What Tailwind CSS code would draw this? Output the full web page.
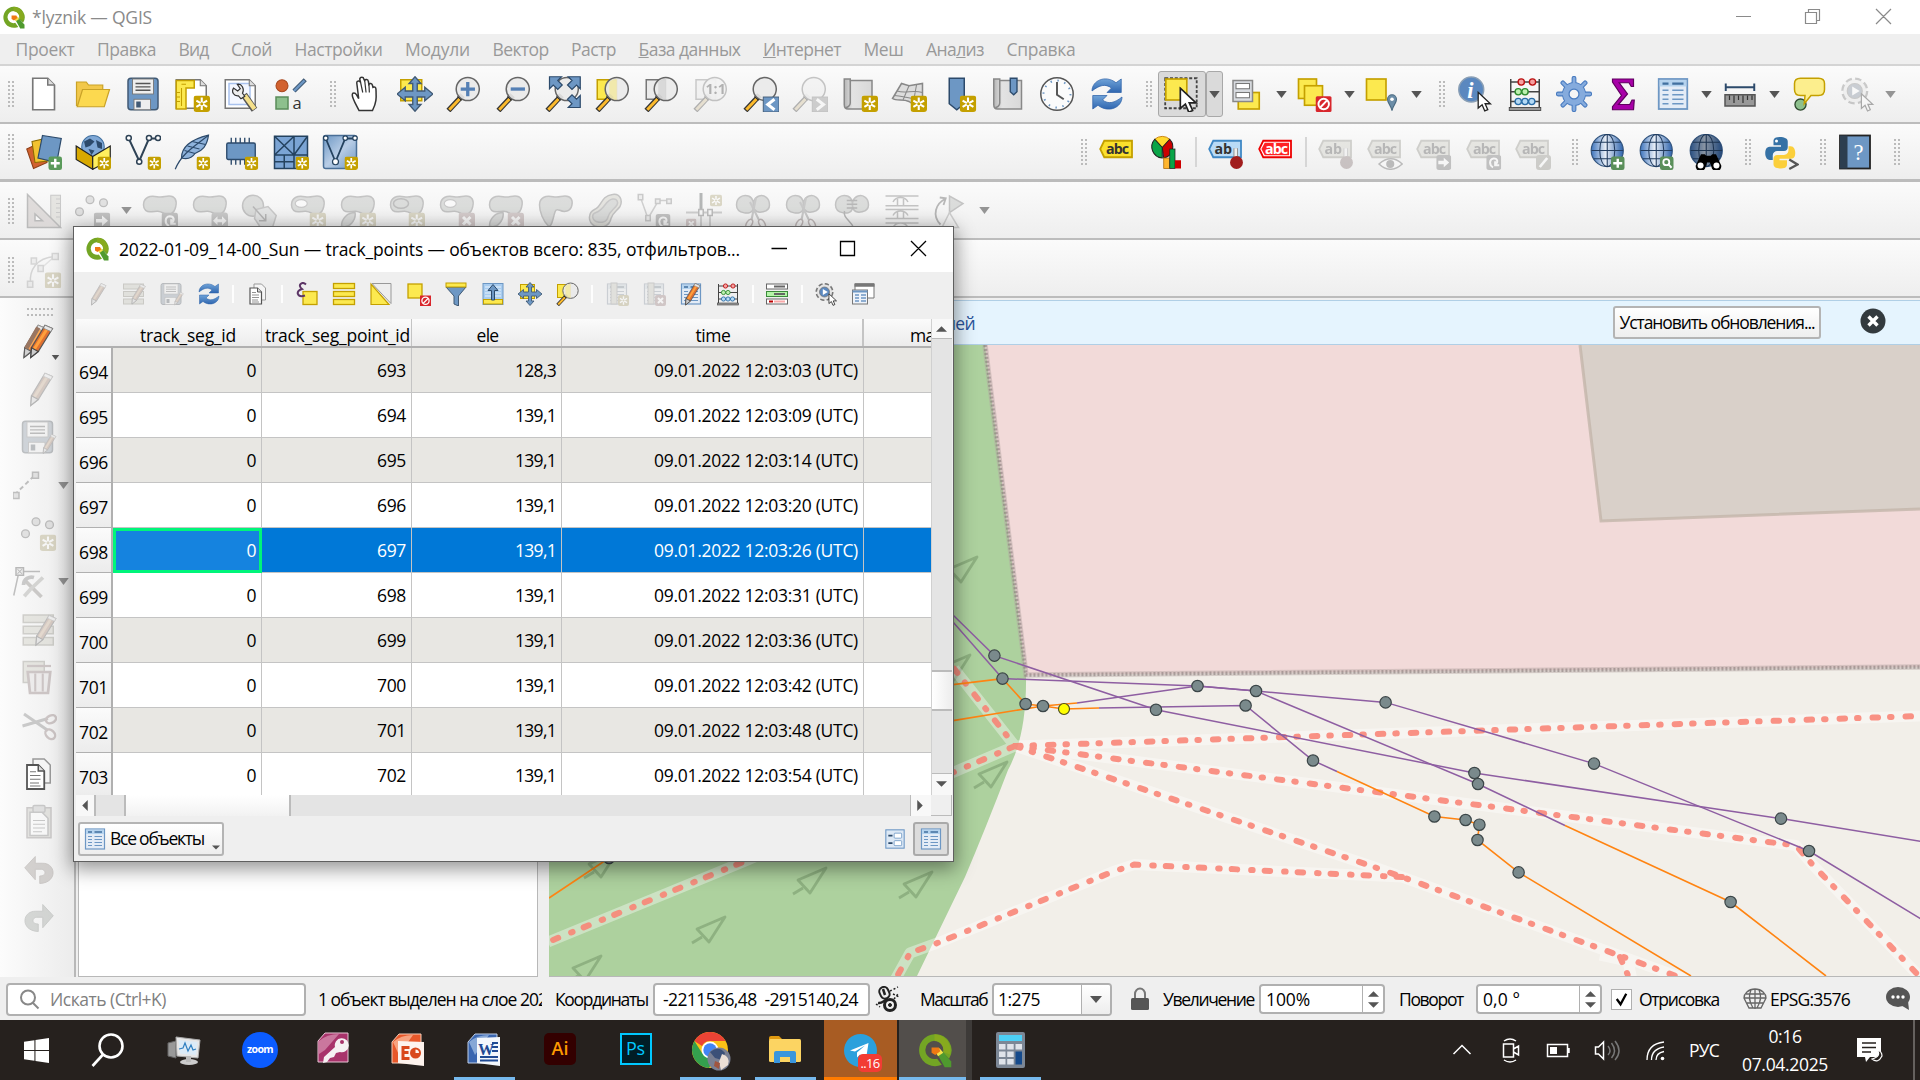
<!DOCTYPE html>
<html lang="ru">
<head>
<meta charset="utf-8">
<title>*lyznik — QGIS</title>
<script src="https://cdn.jsdelivr.net/npm/@tailwindcss/browser@4"></script>
</head>
<body class="w-[1920px] h-[1080px] overflow-hidden bg-[#efefef] font-['Open_Sans','Noto_Sans',sans-serif] text-[17.5px] leading-none text-black">

<svg class="absolute h-0 w-0">
  <defs>
    <linearGradient id="gGlobe" x1="0" x2="1"><stop offset="0" stop-color="#3d74bd"/><stop offset=".45" stop-color="#e8eef6"/><stop offset="1" stop-color="#2c62ac"/></linearGradient>
    <linearGradient id="gBlue" x1="0" y1="0" x2="0" y2="1"><stop offset="0" stop-color="#6fa3d8"/><stop offset="1" stop-color="#2f66b0"/></linearGradient>
    <linearGradient id="gGray" x1="0" x2="1"><stop offset="0" stop-color="#b5b5b5"/><stop offset=".3" stop-color="#e3e3e3"/><stop offset="1" stop-color="#d8d8d8"/></linearGradient>
    <linearGradient id="gSheet" x1="0" y1="0" x2="1" y2="1"><stop offset="0" stop-color="#6d97c4"/><stop offset=".5" stop-color="#b8cde6"/><stop offset="1" stop-color="#6d97c4"/></linearGradient>
  </defs>
</svg>
<svg class="hidden">
  <symbol id="star" viewBox="0 0 11 11"><rect width="11" height="11" rx="2" fill="#c4a000"/><path d="M5.5 1.3v8.4M1.9 3.4l7.2 4.2M1.9 7.6l7.2-4.2" stroke="#fff" stroke-width="1.4"/><circle cx="5.5" cy="5.5" r="1" fill="#c4a000"/></symbol>
  <symbol id="cross" viewBox="0 0 11 11"><rect width="11" height="11" rx="2" fill="#c87070"/><path d="M3 3l5 5M8 3l-5 5" stroke="#fff" stroke-width="2"/></symbol>
  <symbol id="goto" viewBox="0 0 11 11"><rect width="11" height="11" rx="2" fill="#666"/><path d="M1.5 4.3h4V2l4 3.5-4 3.5V6.700h-4z" fill="#fff"/></symbol>
  <symbol id="rot" viewBox="0 0 11 11"><rect width="11" height="11" rx="2" fill="#666"/><path d="M5 9C2 7.500 2 3 5.500 2.500 8.500 2.500 9 5.500 6.500 7M6.500 4.500v3h3" stroke="#fff" stroke-width="1.4" fill="none"/></symbol>
  <symbol id="lens" viewBox="0 0 24 24"><path d="M11 13L1.600 23" stroke="#333" stroke-width="3.600"/><path d="M9 15.300L2.200 22.500" stroke="#fcba2c" stroke-width="2"/><path d="M11 12.800l-2 2.200" stroke="#111" stroke-width="4"/><circle cx="14.500" cy="8.700" r="7.700" fill="#eaeaea" fill-opacity=".93" stroke="#666"/></symbol>
  <symbol id="cursor" viewBox="0 0 12 16"><path d="M1 1v12l3-2.500 2 4.700 2.300-1-2-4.500h4z" fill="#fff" stroke="#222" stroke-width="1"/></symbol>
  <symbol id="penc" viewBox="0 0 24 24"><path d="M16 1.500l5 2.200L11.500 19l-5 4 .5-6.500z" fill="#e07030" stroke="#555" stroke-width=".8"/><path d="M18 3L8.500 18" stroke="#ffa03c" stroke-width="2"/><path d="M7 16.500l4.500 2.500-5 4z" fill="#ccc" stroke="#444" stroke-width=".8"/><path d="M16 1.500l5 2.200-1 2-5-2.200z" fill="#e8e8e8" stroke="#888" stroke-width=".5"/></symbol>
  <symbol id="qlogo" viewBox="0 0 24 24"><path d="M12 .8a11 11 0 1 0 5 21l-3.200-4.200A6.300 6.300 0 1 1 18 13.600l4 4A11 11 0 0 0 12 .8z" fill="#73a524"/><path d="M12 .8a11 11 0 0 1 10.500 14l-4.600-1.700A6.200 6.200 0 0 0 12 5.500z" fill="#87aa1e"/><path d="M14 14.500l3-2.500 6.500 7.500v4h-4.500z" fill="#4f9a2e"/><path d="M12.500 13l3-2.500 2.500 3-3.500 2.500z" fill="#f5e04a"/><path d="M10 10h5l1 2.500-3.500 2.500-2.500-1.500z" fill="#ee7913"/></symbol>

  <symbol id="new" viewBox="0 0 24 24"><path d="M4.500 1.500h10l4.500 4.500v16.500h-14.500z" fill="#fff" stroke="#777" stroke-width="1.100"/><path d="M14.500 1.500v4.500h4.500" fill="#ddd" stroke="#777"/></symbol>
  <symbol id="open" viewBox="0 0 24 24"><path d="M1 20V4h6.500l1.500 2h9.500v4" fill="#f2c84b" stroke="#c9a227" stroke-width=".8"/><path d="M1.500 20.500L5 9h18l-3.500 11.500z" fill="#fcd94f" stroke="#c9a227" stroke-width=".8"/></symbol>
  <symbol id="save" viewBox="0 0 24 24"><rect x="2" y="1.500" width="20" height="21" rx="2" fill="#6d97c4" stroke="#415a75"/><rect x="5" y="2" width="14" height="10" fill="#eee" stroke="#777" stroke-width=".6"/><path d="M7 5h10M7 7.200h10M7 9.500h10" stroke="#555" stroke-width=".9"/><rect x="6" y="15.500" width="11" height="7" fill="#eee" stroke="#777" stroke-width=".6"/><rect x="7.500" y="17" width="3" height="4" fill="#415a75"/></symbol>
  <symbol id="layout" viewBox="0 0 24 24"><path d="M1.500 2.500h16l4 4v15h-20z" fill="#fff" stroke="#777"/><path d="M1.500 3h12v5H8v14H1.500z" fill="#fce94f" stroke="#c4a000"/><path d="M5 5.500h3M5 8v12M2 11h2M2 14h2M2 17h2" stroke="#c4a000" stroke-width=".7"/><path d="M17.500 2.500v4h4" fill="#ddd" stroke="#777" stroke-width=".7"/><use href="#star" x="13" y="13" width="11" height="11"/></symbol>
  <symbol id="layman" viewBox="0 0 24 24"><path d="M1.500 2.500h16l4 4v15h-20z" fill="#fff" stroke="#777"/><rect x="4" y="5" width="14" height="14" fill="#f4f7ff" stroke="#a9c2ee"/><path d="M17.500 2.500v4h4" fill="#ddd" stroke="#777" stroke-width=".7"/><path d="M14 12.500l7 10" stroke="#555" stroke-width="4.500"/><path d="M14.500 13l6.500 9" stroke="#f5e08a" stroke-width="3"/><path d="M9.500 5.500c3-.5 5 3 3.500 6l1.500 2-2.500 1.700-1.700-2C7 13.500 5.500 10.500 7 8l2.800 2 1.700-1.500z" fill="#eee" stroke="#333" stroke-width=".8"/></symbol>
  <symbol id="style" viewBox="0 0 24 24"><circle cx="6" cy="6.500" r="4" fill="#d2622f" stroke="#a8471d" stroke-width=".7"/><path d="M21.500 2.500l-7.500 7.500" stroke="#415a75" stroke-width="3"/><path d="M21 3l-7 7" stroke="#6d97c4" stroke-width="1.600"/><rect x="2" y="14" width="8" height="8" fill="#8dc08d" stroke="#5a8c5a"/><text x="13" y="22" font-size="11" fill="#333">a</text></symbol>
  <symbol id="hand" viewBox="0 0 24 24"><path d="M8 23C6 19 3.500 15 3.500 12.500c0-1.500 2-1.500 2.800 0l1.500 2.500L6.500 4.500C6.500 3 8.500 2.800 9 4.300L8.500 2c.3-1.500 2.500-1.500 2.700 0l.5 1c.6-1 2.300-.8 2.500.5l.4 2c.6-.9 2-.7 2.300.5l.4 1.500c1-.6 1.900 0 2 1.200C19.500 14 20 17 17 23z" fill="#fff" stroke="#333" stroke-width="1"/><path d="M9 4l1.500 7M11.800 3l.9 8M14.600 5l.3 6" stroke="#333" stroke-width=".8"/></symbol>
  <symbol id="pan" viewBox="0 0 24 24"><rect x="2.500" y="2.500" width="14" height="14" fill="#fce94f" stroke="#c4a000"/><path d="M12 .5l4 4.500h-2.500v5h5V7.500L24 12l-5.500 4.500V14h-5v5H16l-4 4.500L8 19h2.500v-5h-5v2.500L0 12l5.500-4.500V10h5V5H8z" fill="#6d97c4" stroke="#415a75" stroke-width=".9"/></symbol>
  <symbol id="zin" viewBox="0 0 24 24"><use href="#lens"/><path d="M14.500 4v9.500M9.800 8.700h9.500" stroke="#5580b5" stroke-width="2.200"/></symbol>
  <symbol id="zout" viewBox="0 0 24 24"><use href="#lens"/><path d="M9.800 8.700h9.500" stroke="#5580b5" stroke-width="2.200"/></symbol>
  <symbol id="zfull" viewBox="0 0 24 24"><use href="#lens"/><path d="M3 .5h8l-2.500 2.500 3 3-3 3-3-3L3 8.500zM23.500.5v8L21 6l-3 3-3-3 3-3-2.500-2.500zM23.500 21h-8l2.500-2.500-3-3 3-3 3 3 2.500-2.500z" fill="#6d97c4" stroke="#2c4a6b" stroke-width=".8"/></symbol>
  <symbol id="zsel" viewBox="0 0 24 24"><rect x="1.500" y="2.500" width="13" height="13" fill="#fce94f" stroke="#c4a000"/><use href="#lens"/><path d="M9.500 4c1-1 3-2 5-2v14c-2 0-4-1-5-2z" fill="#fce94f" opacity=".35"/></symbol>
  <symbol id="zlay" viewBox="0 0 24 24"><rect x="1.500" y="2.500" width="13" height="13" fill="#eaeaea" stroke="#777"/><use href="#lens"/><path d="M9.500 4c1-1 3-2 5-2v14c-2 0-4-1-5-2z" fill="#bbb" opacity=".35"/></symbol>
  <symbol id="z11" viewBox="0 0 24 24"><rect x="2" y="2.500" width="13" height="13" fill="#eaeaea" stroke="#777"/><use href="#lens"/><text x="8.300" y="12.300" font-size="9.500" font-weight="700" fill="#333">1:1</text></symbol>
  <symbol id="zlast" viewBox="0 0 24 24"><use href="#lens"/><rect x="13.500" y="14" width="10.500" height="10" fill="#6d97c4" stroke="#415a75" stroke-width=".6"/><path d="M21 15.500l-4.500 3.500 4.500 3.500" stroke="#fff" stroke-width="2" fill="none"/></symbol>
  <symbol id="znext" viewBox="0 0 24 24"><use href="#lens"/><rect x="13.500" y="14" width="10.500" height="10" fill="#888" stroke="#666" stroke-width=".6"/><path d="M16.500 15.500l4.500 3.500-4.500 3.500" stroke="#fff" stroke-width="2" fill="none"/></symbol>
  <symbol id="map" viewBox="0 0 24 24"><path d="M1.500 2h4v1H20v19H4c-2 0-2.500-1-2.500-3z" fill="url(#gGray)" stroke="#888"/><path d="M5.500 3v15c0 2-2 3-3 3" fill="none" stroke="#888"/></symbol>
  <symbol id="newmap" viewBox="0 0 24 24"><use href="#map"/><use href="#star" x="13" y="13" width="11" height="11"/></symbol>
  <symbol id="new3d" viewBox="0 0 24 24"><path d="M1 15L7 5l5 1.500L21 5v14c-3-2-6 1-9-2-4-2-8 0-11-2z" fill="#ddd" stroke="#888"/><path d="M4 10c6 2 10-1 17 1M2 13c7 0 9 3 19 2M12 6.500L8 16M17 6l-2 11" stroke="#888" fill="none" stroke-width=".7"/><use href="#star" x="13" y="13" width="11" height="11"/></symbol>
  <symbol id="bmnew" viewBox="0 0 24 24"><path d="M5.500 1.500h10v17l-5 4-5-4z" fill="#6d97c4" stroke="#2c4a6b"/><use href="#star" x="12.500" y="13" width="11" height="11"/></symbol>
  <symbol id="bm" viewBox="0 0 24 24"><g transform="translate(1 0)"><use href="#map"/></g><path d="M13.500 1.500h4.500v9l-2.200 2-2.300-2z" fill="#6d97c4" stroke="#2c4a6b" stroke-width=".9"/></symbol>
  <symbol id="clock" viewBox="0 0 24 24"><circle cx="12" cy="12" r="10.800" fill="#fbfbfb" stroke="#555" stroke-width="1"/><circle cx="12" cy="12" r="9" fill="none" stroke="#6d97c4" stroke-width="1.300" stroke-dasharray="1 3.712"/><path d="M12 4v8.500l4.500 3" stroke="#555" stroke-width="1.300" fill="none"/></symbol>
  <symbol id="refresh" viewBox="0 0 24 24"><path d="M2 10C2 3 11-1 18 4.500L21.500 2v9H12l3-3C11 5 7 6 2 10z" fill="url(#gBlue)" stroke="#2d62a8" stroke-width=".5"/><path d="M22 14c0 7-9 11-16 5.500L2.500 22v-9H12l-3 3c4 3 8 2 13-2z" fill="url(#gBlue)" stroke="#2d62a8" stroke-width=".5"/></symbol>
  <symbol id="select" viewBox="0 0 24 24"><rect x=".8" y="1.500" width="21" height="20" fill="none" stroke="#444" stroke-dasharray="2 1.200" stroke-width="1.200"/><rect x="1.200" y="2" width="14" height="14" fill="#fce94f" stroke="#c4a000" stroke-width="1.100"/><use href="#cursor" x="9" y="7" width="15" height="18"/></symbol>
  <symbol id="selform" viewBox="0 0 24 24"><rect x="5.500" y="11" width="14" height="11" fill="#fce94f" stroke="#c4a000" stroke-width="1.100"/><rect x="2" y="3" width="13" height="14" fill="#d8dbe0" stroke="#888"/><rect x="4" y="5" width="9" height="3.500" fill="#fff" stroke="#777" stroke-width=".7"/><rect x="4" y="11" width="9" height="3.500" fill="#fff" stroke="#777" stroke-width=".7"/></symbol>
  <symbol id="desel" viewBox="0 0 24 24"><rect x="1" y="2" width="12" height="13" fill="#fce94f" stroke="#c4a000" stroke-width="1.100"/><rect x="5" y="6.500" width="12" height="13" fill="#fce94f" stroke="#c4a000" stroke-width="1.100"/><rect x="12.500" y="13.500" width="10.500" height="10.500" rx="1" fill="#d8262c"/><circle cx="17.800" cy="18.700" r="3.500" fill="none" stroke="#fff" stroke-width="1.300"/><path d="M15.500 21l4.500-4.700" stroke="#fff" stroke-width="1.300"/></symbol>
  <symbol id="selloc" viewBox="0 0 24 24"><rect x="1" y="2" width="13" height="14" fill="#fce94f" stroke="#c4a000" stroke-width="1.100"/><path d="M18 23c-1-4-3-5-3-7.500a3 3 0 0 1 6 0C21 18 19 19 18 23z" fill="#6c8ea8" stroke="#4a6a80" stroke-width=".7"/><circle cx="18" cy="15.500" r="1.200" fill="#fff"/></symbol>
  <symbol id="ident" viewBox="0 0 24 24"><circle cx="9.500" cy="9" r="8.300" fill="#5b88bf" stroke="#8a9fb5"/><text x="6.800" y="14.500" font-size="15" font-style="italic" font-weight="700" fill="#fff" font-family="Liberation Serif">i</text><use href="#cursor" x="13" y="10" width="11" height="14"/></symbol>
  <symbol id="abacus" viewBox="0 0 24 24"><path d="M2.500 2v19M21.500 2v19M2.500 4h19M2.500 10.500h19M2.500 17h19" stroke="#444" fill="none"/><rect x="1.500" y="21" width="21" height="2" fill="#999" stroke="#444" stroke-width=".6"/><g stroke-width=".9"><g fill="#f7a1a1" stroke="#b11"><circle cx="9.500" cy="4" r="2.100"/><circle cx="17" cy="4" r="2.100"/></g><g fill="#bdf0b0" stroke="#2e8b2e"><circle cx="7.500" cy="10.500" r="2.100"/><circle cx="12" cy="10.500" r="2.100"/></g><g fill="#b5daf5" stroke="#2b6ea8"><circle cx="7.500" cy="17" r="2.100"/><circle cx="12" cy="17" r="2.100"/><circle cx="16.500" cy="17" r="2.100"/></g></g></symbol>
  <symbol id="gear" viewBox="0 0 24 24"><path d="M12 1.500v21M1.500 12h21M4.600 4.600l14.800 14.800M19.400 4.600L4.600 19.400" stroke="#4a7cc0" stroke-width="3.200" stroke-linecap="round"/><circle cx="12" cy="12" r="5.500" fill="none" stroke="#4a7cc0" stroke-width="5"/><path d="M12 1.500v21M1.500 12h21M4.600 4.600l14.800 14.800M19.400 4.600L4.600 19.400" stroke="#85abdd" stroke-width="1.800" stroke-linecap="round"/><circle cx="12" cy="12" r="5.500" fill="none" stroke="#85abdd" stroke-width="3.800"/><circle cx="12" cy="12" r="3.300" fill="#f5f5f5" stroke="#4a7cc0" stroke-width=".8"/></symbol>
  <symbol id="sigma" viewBox="0 0 24 24"><path d="M5 2h14v5h-1.500L16 4.500H9.500L15 12 9 19h7.500l1.500-3h1.500l-.5 6.500H5v-2L11 13 5 4z" fill="#a800a8" stroke="#600060" stroke-width=".8"/></symbol>
  <symbol id="table" viewBox="0 0 24 24"><rect x="2.500" y="2" width="19" height="20" fill="#e4ecf6" stroke="#6d97c4" stroke-width="1.200"/><rect x="3.100" y="2.600" width="17.800" height="4.400" fill="#b5d3ee"/><path d="M5 5h4M11.500 5h7.500" stroke="#41709f" stroke-width="1.500"/><path d="M5 9.500h4M11.500 9.500h7.500M5 12.500h4M11.500 12.500h7.500M5 15.500h4M11.500 15.500h7.500M5 18.500h4M11.500 18.500h7.500" stroke="#6d97c4"/></symbol>
  <symbol id="ruler" viewBox="0 0 24 24"><path d="M2.500 5v5M21.500 5v5M2.500 7.500h19" stroke="#2c4a6b" stroke-width="1.300"/><rect x="2" y="12.500" width="20" height="7.500" fill="#999" stroke="#555"/><path d="M5 13v3M8 13v5M11 13v3M14 13v5M17 13v3M20 13v3" stroke="#333" stroke-width=".8"/></symbol>
  <symbol id="tip" viewBox="0 0 24 24"><circle cx="7" cy="19" r="3.700" fill="#8dc08d" stroke="#2f4a2f" stroke-width=".9"/><path d="M7 1.500h12q4 0 4 3.500v4q0 4-4 4h-5l-4.500 5.500L10 13H7q-4 0-4-4V5q0-3.500 4-3.500z" fill="#fcee8d" stroke="#c4a000"/></symbol>
  <symbol id="act" viewBox="0 0 24 24"><circle cx="10.500" cy="10" r="7.800" fill="#ddd" stroke="#777" stroke-width="2.500" stroke-dasharray="4 2.130"/><circle cx="10.500" cy="10" r="7.500" fill="#e6e6e6"/><circle cx="10.500" cy="10" r="5" fill="#5b88bf" stroke="#777" stroke-width=".8"/><path d="M8.800 7l5 3-5 3z" fill="#fff"/><use href="#cursor" x="14" y="11" width="10" height="13"/></symbol>
  <symbol id="dsm" viewBox="0 0 24 24"><path d="M.5 10L9 6l5 13-9 4z" fill="#d2622f" stroke="#8e3f18" stroke-width=".7"/><path d="M4 5l9-2 2 15-9 1z" fill="#f2c230" stroke="#8a6a00" stroke-width=".7"/><path d="M11 1l12.500 2-3 16L8 16z" fill="#6d97c4" stroke="#2c4a6b" stroke-width=".8"/><rect x="15" y="15" width="9" height="9" rx="1.500" fill="#5a9a5a"/><path d="M19.500 16.500v6M16.500 19.500h6" stroke="#fff" stroke-width="1.600"/></symbol>
  <symbol id="gpkg" viewBox="0 0 24 24"><circle cx="12" cy="8.500" r="7.500" fill="#7fa8d6" stroke="#41709f" stroke-width=".7"/><path d="M6 5l4-2 3 2-3 3-3 1zM14 4l4 2v4l-3-1zM9 10l4 1-2 3z" fill="#2c4a6b"/><path d="M.8 8l11 7v8.500L.8 17z" fill="#d8a900" stroke="#222" stroke-width=".8"/><path d="M11.800 15L23.500 8v9.500l-11.700 6z" fill="#ffef5e" stroke="#222" stroke-width=".8"/><use href="#star" x="15" y="15" width="9" height="9"/></symbol>
  <symbol id="vnew" viewBox="0 0 24 24"><path d="M2.500 3l7 15 6.500-15h5.500" fill="none" stroke="#2f4356" stroke-width="1.300"/><g fill="#fff" stroke="#2f4356"><circle cx="2.500" cy="2.700" r="1.700"/><circle cx="9.500" cy="18.500" r="1.700"/><circle cx="16" cy="2.700" r="1.700"/><circle cx="22" cy="2.700" r="1.700"/></g><use href="#star" x="15" y="15" width="9" height="9"/></symbol>
  <symbol id="feather" viewBox="0 0 24 24"><path d="M23 .8C14 3 5 7 5 16c4 1 7 0 9-3 5-2 8-5 9-12.200z" fill="#8fb3dc" stroke="#2c4a6b" stroke-width=".8"/><path d="M23 .8C14 8 5 13 .8 23.500M9 8l8 2M7 11l7 2M12 5l9 2" stroke="#2c4a6b" stroke-width=".8" fill="none"/><use href="#star" x="15" y="15" width="9" height="9"/></symbol>
  <symbol id="mem" viewBox="0 0 24 24"><path d="M5.500 2.500v18M8.500 2.500v18M11.500 2.500v18M14.500 2.500v18M17.500 2.500v18" stroke="#2c4a6b" stroke-width=".9"/><rect x="2.500" y="6" width="19" height="11" rx="1" fill="#6d97c4" stroke="#2c4a6b" stroke-width=".9"/><use href="#star" x="14.500" y="15" width="9" height="9"/></symbol>
  <symbol id="mesh" viewBox="0 0 24 24"><rect x="1" y="1.500" width="22" height="21.500" fill="#7ba4d4" stroke="#24425f"/><path d="M1 14h22M14 1.500v12.500M1 1.500L14 14M14 1.500L1 14M14 14l9-12.500M1 18.500h13M7.500 14v9M14 14v9" stroke="#24425f" fill="none"/><use href="#star" x="15" y="15" width="9" height="9"/></symbol>
  <symbol id="virt" viewBox="0 0 24 24"><rect x="1" y="1" width="22" height="22" rx="1.500" fill="url(#gSheet)" stroke="#4a6f97"/><path d="M2.500 3L9 18.500 15.500 3H22" fill="none" stroke="#24425f" stroke-width="1.200"/><g fill="#fff" stroke="#24425f" stroke-width=".8"><circle cx="2.500" cy="2.700" r="1.500"/><circle cx="9" cy="18.500" r="2"/><circle cx="15.500" cy="2.700" r="1.500"/><circle cx="22" cy="2.700" r="1.500"/></g><use href="#star" x="15" y="15" width="9" height="9"/></symbol>

  <symbol id="tag" viewBox="0 0 24 24"><path d="M3.500 4.500H22v11H3.500L.8 10z" stroke-width="1.200"/></symbol>
  <symbol id="abc" viewBox="0 0 24 24"><use href="#tag" fill="#fbe02c" stroke="#c4a000"/><text x="4.600" y="13.500" font-size="9.500" font-weight="700" fill="#333" textLength="15.500">abc</text></symbol>
  <symbol id="abcr" viewBox="0 0 24 24"><use href="#tag" fill="#fff" stroke="#e00"/><path d="M4.500 5.800h16.200v8.400H4.500L2.300 10z" fill="#f22"/><text x="4.600" y="13.500" font-size="9.500" font-weight="700" fill="#fff" textLength="15.500">abc</text></symbol>
  <symbol id="abp" viewBox="0 0 24 24"><use href="#tag" fill="#b9dbf7" stroke="#3f88c5"/><text x="4.300" y="13.500" font-size="9.500" font-weight="700" fill="#333">ab</text><path d="M18.500 9.500v8" stroke="#888" stroke-width="3"/><path d="M18.500 9.500v7" stroke="#eee" stroke-width="1.800"/><circle cx="19" cy="19" r="4.300" fill="#a11d1d"/></symbol>
  <symbol id="abpg" viewBox="0 0 24 24"><use href="#tag" fill="#c9c8a8" stroke="#8a8968"/><text x="4.300" y="13.500" font-size="9.500" font-weight="700" fill="#444">ab</text><path d="M18.500 9.500v8" stroke="#888" stroke-width="3"/><path d="M18.500 9.500v7" stroke="#eee" stroke-width="1.800"/><circle cx="19" cy="19" r="4.300" fill="#a16060"/></symbol>
  <symbol id="abg" viewBox="0 0 24 24"><use href="#tag" fill="#c9c8a8" stroke="#8a8968"/><text x="4.600" y="13.500" font-size="9.500" font-weight="700" fill="#444" textLength="15.500">abc</text></symbol>
  <symbol id="abeye" viewBox="0 0 24 24"><use href="#abg"/><path d="M8 20q8-7 15.500 0-8 7-15.500 0z" fill="#fff" stroke="#555"/><circle cx="15.500" cy="20" r="2.700" fill="#555"/></symbol>
  <symbol id="abmove" viewBox="0 0 24 24"><use href="#abg"/><use href="#goto" x="13.500" y="14" width="10" height="10"/></symbol>
  <symbol id="abrot" viewBox="0 0 24 24"><use href="#abg"/><use href="#rot" x="13.500" y="14" width="10" height="10"/></symbol>
  <symbol id="abedit" viewBox="0 0 24 24"><use href="#abg"/><rect x="14" y="14" width="10" height="10" rx="2" fill="#8a8968"/><path d="M21.500 16l-5 6" stroke="#fff" stroke-width="1.800"/></symbol>
  <symbol id="diag" viewBox="0 0 24 24"><g transform="translate(1.500 0)"><path d="M8 9L3 3.500A7.500 7.500 0 0 1 13 3.500z" fill="#ffd92e" stroke="#c77a00" stroke-width=".6"/><path d="M8 9L13 3.500A7.500 7.500 0 0 1 9 16z" fill="#c00" stroke="#222" stroke-width=".7"/><path d="M8 9v7A7.500 7.500 0 0 1 3 3.500z" fill="#0aa548" stroke="#222" stroke-width=".7"/><rect x="9" y="16" width="4" height="7" fill="#ffb52e" stroke="#a60" stroke-width=".5"/><rect x="13" y="10" width="3.500" height="13" fill="#0aa548" stroke="#222" stroke-width=".5"/><rect x="16.500" y="17.500" width="4" height="5.500" fill="#c00"/></g></symbol>
  <symbol id="globe" viewBox="0 0 24 24"><circle cx="11.500" cy="11" r="10.700" fill="url(#gGlobe)" stroke="#33557f" stroke-width=".8"/><ellipse cx="11.500" cy="11" rx="5" ry="10.700" fill="none" stroke="#223c5e" stroke-width=".7"/><path d="M11.500.5v21M1 11h21M2.500 5.500h18M2.500 16.500h18" stroke="#223c5e" stroke-width=".7"/></symbol>
  <symbol id="gadd" viewBox="0 0 24 24"><use href="#globe"/><rect x="14" y="15" width="9" height="9" rx="1.500" fill="#5a8f5a"/><path d="M18.500 16.500v6M15.500 19.500h6" stroke="#fff" stroke-width="1.600"/></symbol>
  <symbol id="gfind" viewBox="0 0 24 24"><use href="#globe"/><rect x="14" y="15" width="9" height="9" rx="1.500" fill="#5a8f5a"/><circle cx="18.200" cy="18.800" r="2" fill="none" stroke="#fff" stroke-width="1.200"/><path d="M19.700 20.300l2 2.200" stroke="#fff" stroke-width="1.300"/></symbol>
  <symbol id="gbin" viewBox="0 0 24 24"><use href="#globe"/><circle cx="11.500" cy="11" r="10.500" fill="#16283f" opacity=".45"/><path d="M8 13.500h2.500l1 1h3l1-1H18L21.500 21a3 3 0 0 1-6.500 1l-1-3h-2l-1 3a3 3 0 0 1-6.500-1z" fill="#000"/><circle cx="7.700" cy="21" r="2" fill="#fff"/><circle cx="18.300" cy="21" r="2" fill="#fff"/></symbol>
  <symbol id="py" viewBox="0 0 24 24"><path d="M11 2c-4 0-4 2-4 3v2.500h5v1H4.500C2 8.500 1.500 11 1.500 13s1 4.300 3 4.300h2v-3c0-2 1.500-3 3-3h4.500c1.500 0 2.500-1 2.500-2.500V5c0-2-2-3-5.500-3z" fill="#3571a5"/><path d="M12 23c4 0 4-2 4-3v-2.500h-5v-1h7.500c2.500 0 3-2 3-4s-1-4.300-3-4.300h-1.500v2.500c0 2-1.500 3.300-3 3.300H9.500C8 14 7 15 7 16.500V20c0 2 1.500 3 5 3z" fill="#fbcf3b"/><circle cx="9" cy="4.700" r="1" fill="#fff"/><path d="M17.500 17l5.500 3.300-5.500 3" stroke="#555" stroke-width="1.500" fill="none"/></symbol>
  <symbol id="help" viewBox="0 0 24 24"><rect x="2" y="1" width="20" height="22" fill="#6d97c4" stroke="#222" stroke-width="1.200"/><rect x="2" y="1" width="5" height="22" fill="#2c3e50"/><text x="11" y="17" font-size="15" fill="#fff" font-family="Liberation Serif">?</text></symbol>

  <symbol id="tri" viewBox="0 0 24 24"><rect x="16.500" y="1.500" width="6.500" height="21" fill="#c9c6a9" stroke="#777" stroke-width=".7"/><path d="M1 1v22h22z" fill="#c9a9a0" stroke="#555"/><path d="M6 14v4.500h5z" fill="#fff" stroke="#555"/><path d="M20 4h3M20 7h3M20 10h3M20 13h3M20 16h3" stroke="#777" stroke-width=".6"/></symbol>
  <symbol id="dots" viewBox="0 0 24 24"><g fill="#bbb" stroke="#555" stroke-width=".9"><circle cx="10" cy="4.500" r="2.600"/><circle cx="19" cy="6.500" r="2.600"/><circle cx="3" cy="12.500" r="2.600"/></g></symbol>
  <symbol id="dotm" viewBox="0 0 24 24"><use href="#dots"/><use href="#goto" x="12.500" y="13" width="11" height="11"/></symbol>
  <symbol id="dotn" viewBox="0 0 24 24"><use href="#dots"/><use href="#star" x="12.500" y="13" width="11" height="11"/></symbol>
  <symbol id="blob" viewBox="0 0 24 24"><path d="M1 8c0-5 4-6.500 9-5.500 4 .8 5-.5 8-.5 4 0 5.500 3 4.500 7-1 5-5 6.500-8 4.500-3-1.800-5-1.500-8-1C3 13 1 11 1 8z" fill="#a5b0a5" stroke="#666"/></symbol>
  <symbol id="b1" viewBox="0 0 24 24"><use href="#blob"/><use href="#rot" x="13" y="13" width="11" height="11"/></symbol>
  <symbol id="b2" viewBox="0 0 24 24"><use href="#blob"/><rect x="13" y="13" width="11" height="11" rx="2" fill="#777"/><path d="M14 18.500l3-3v2h3v-2l3 3-3 3v-2h-3v2z" fill="#fff"/></symbol>
  <symbol id="b3" viewBox="0 0 24 24"><circle cx="8" cy="8.500" r="7" fill="#a5b0a5" stroke="#666"/><path d="M10 11l8-2 5.500 6-2.500 8h-8L9 17z" fill="#c0c8c8" stroke="#777"/><path d="M8 9l8 9M16.500 14v4.500h-4.500" stroke="#444" fill="none"/></symbol>
  <symbol id="b4" viewBox="0 0 24 24"><use href="#blob"/><ellipse cx="7.500" cy="7" rx="4" ry="2.600" fill="#fff" stroke="#777" stroke-width=".8"/><use href="#star" x="13" y="13" width="11" height="11"/></symbol>
  <symbol id="b5" viewBox="0 0 24 24"><use href="#blob"/><path d="M1 22c0-5 4-9 9-9 1 5-4 11-9 9z" fill="#a5b0a5" stroke="#666"/><use href="#star" x="13" y="13" width="11" height="11"/></symbol>
  <symbol id="b6" viewBox="0 0 24 24"><use href="#blob"/><ellipse cx="8" cy="7" rx="5" ry="3.200" fill="#a5b0a5" stroke="#555"/><use href="#star" x="13" y="13" width="11" height="11"/></symbol>
  <symbol id="b7" viewBox="0 0 24 24"><use href="#blob"/><ellipse cx="7.500" cy="7" rx="4" ry="2.600" fill="#fff" stroke="#777" stroke-width=".8"/><use href="#cross" x="13" y="13" width="11" height="11"/></symbol>
  <symbol id="b8" viewBox="0 0 24 24"><use href="#blob"/><path d="M1 22c0-5 4-9 9-9 1 5-4 11-9 9z" fill="#a5b0a5" stroke="#666"/><use href="#cross" x="13" y="13" width="11" height="11"/></symbol>
  <symbol id="b9" viewBox="0 0 24 24"><path d="M1 8c0-5 4-6.500 9-5.500 4 .8 5-.5 8-.5 4 0 5.500 3 4.500 6.500-1 4-5 4.500-8 3-3-1.300-3 .5-4 4-1 4-2 8-4 6-3-3-5.500-9-5.500-13.500z" fill="#a5b0a5" stroke="#666"/></symbol>
  <symbol id="b10" viewBox="0 0 24 24"><path d="M17 1c5-1 7 4 5 8-2 3-5 4-6 8-1 5-6 7-11 5-5-3-4-9 0-11 5-2 4-9 12-10z" fill="#c9c29a" stroke="#666"/><path d="M17 4c3-.5 4 2 3 4-2 3-5 4-6 8-1 4-5 4-8 3-3-2-3-5 0-6 6-2 6-8 11-9z" fill="#a5b0a5" stroke="#777"/></symbol>
  <symbol id="b11" viewBox="0 0 24 24"><path d="M3 3l5 14 7-12h8" stroke="#888" fill="none"/><g fill="#ddd" stroke="#777"><rect x="1.500" y="1" width="3" height="3.500"/><rect x="6.500" y="15" width="3" height="3.500"/><rect x="13" y="4" width="3" height="3"/><rect x="20.500" y="4" width="3" height="3"/></g><use href="#rot" x="13" y="14" width="10" height="10"/></symbol>
  <symbol id="b12" viewBox="0 0 24 24"><path d="M10 0v11" stroke="#344" stroke-width="2"/><path d="M0 13h24M10 13v11M16 13v11" stroke="#888" stroke-width="1.200"/><g fill="#fff" stroke="#555"><rect x="8.500" y="11" width="3" height="4"/><rect x="14.500" y="11" width="3" height="4"/></g><use href="#star" x="16" y="1" width="8" height="8"/><use href="#cross" x="0" y="17" width="7" height="7"/></symbol>
  <symbol id="b13" viewBox="0 0 24 24"><path d="M1 8c0-5 4-7 8-6 3 1 4 5 3 9s-11 3-11-3zM23 8c0-5-4-7-7-6-3 1-5 5-3 9 2 3 10 2 10-3z" fill="#a5b0a5" stroke="#666"/><path d="M14 3l-3 15M10 6l6 12" stroke="#777" stroke-width="1.400"/><ellipse cx="9.500" cy="20.500" rx="1.800" ry="3.200" transform="rotate(30 9.500 20.500)" fill="none" stroke="#844"/><ellipse cx="18" cy="20.500" rx="1.800" ry="3.200" transform="rotate(-30 18 20.500)" fill="none" stroke="#844"/></symbol>
  <symbol id="b14" viewBox="0 0 24 24"><path d="M1 8c0-5 4-7 8-6 3 1 4 5 3 9s-11 3-11-3zM23 8c0-5-4-7-7-6-3 1-5 5-3 9 2 3 10 2 10-3z" fill="#a5b0a5" stroke="#666"/><path d="M8.500 5h7M8.500 7.500h7M8.500 10h7M7 12c-1 5 4 6 6 11" stroke="#444" fill="none"/></symbol>
  <symbol id="b15" viewBox="0 0 24 24"><path d="M1 2h22M1 8.500h22M1 11h22M1 17h22M1 20h22M6 6c2-4 8-4 10 0M6 15c2-4 8-4 10 0M6 23c2-4 8-4 10 0M9 4v4M13 4v4M9 12v5M13 12v5" stroke="#666" fill="none"/></symbol>
  <symbol id="b16" viewBox="0 0 24 24"><path d="M11 2v11l9-6z" fill="#a5b0a5" stroke="#666"/><path d="M11 13l-5 10h11z" fill="none" stroke="#888"/><path d="M5 21C-1 15 2 7 8 4M4.500 3L8.500 3.500 7 8" fill="none" stroke="#444" stroke-width="1.200"/></symbol>
  <symbol id="circ" viewBox="0 0 24 24"><path d="M3 21C2 12 7 4 19 3" fill="none" stroke="#999"/><path d="M10 11l9-8" stroke="#bbb"/><g fill="#ddd" stroke="#999"><rect x="1" y="19.500" width="3.500" height="4"/><rect x="3.500" y="4" width="3.500" height="4"/><rect x="8" y="9" width="3.500" height="4"/><rect x="17.500" y="1" width="4" height="4"/></g><use href="#star" x="12.500" y="13.500" width="11" height="11"/></symbol>

  <symbol id="pencils" viewBox="0 0 24 24"><g transform="translate(-4.500 0)" opacity=".85"><use href="#penc"/><path d="M16 3L8 17" stroke="#8a6048" stroke-width="3"/></g><use href="#penc"/></symbol>
  <symbol id="pencil" viewBox="0 0 24 24"><use href="#penc"/></symbol>
  <symbol id="savee" viewBox="0 0 24 24"><g transform="translate(-1 0)"><use href="#save"/></g><use href="#penc" x="11" y="9" width="14" height="15"/></symbol>
  <symbol id="line" viewBox="0 0 24 24"><g transform="translate(-2 0)"><path d="M3 18.500L16 6" stroke="#555" stroke-width="1.300" stroke-dasharray="3 2"/><g fill="#bbb" stroke="#555"><rect x="2" y="17" width="4" height="4"/><rect x="15" y="3.500" width="4" height="4"/></g></g></symbol>
  <symbol id="vertex" viewBox="0 0 24 24"><path d="M.5 21L4 5h14" fill="none" stroke="#555"/><rect x="2" y="2.500" width="5" height="5" fill="#ddd" stroke="#444"/><path d="M3 3.500l3 3M6 3.500l-3 3" stroke="#444" stroke-width=".7"/><path d="M8 11l11 11" stroke="#876" stroke-width="2.500"/><path d="M20 9l-8.500 8-4 4.500" stroke="#998" stroke-width="2.500"/><path d="M7 14c0-4 4-6 7-5" stroke="#777" stroke-width="2.500" fill="none"/></symbol>
  <symbol id="rows" viewBox="0 0 24 24"><g fill="#ccc79c" stroke="#8a8660"><rect x="1.500" y="2" width="20" height="5"/><rect x="1.500" y="9.500" width="20" height="5"/><rect x="1.500" y="17" width="20" height="5"/></g></symbol>
  <symbol id="medit" viewBox="0 0 24 24"><use href="#rows"/><use href="#penc" x="4" y="0" width="22" height="24"/></symbol>
  <symbol id="trash" viewBox="0 0 24 24"><rect x="1.500" y="1" width="14" height="14" fill="#ccc79c" stroke="#8a8660"/><path d="M4 4h16" stroke="#a66" stroke-width="1.500"/><path d="M4.500 8h15l-1.500 14H6z" fill="#e8d6d6" stroke="#a66" stroke-width="1.800"/><path d="M9.500 9v12M14.500 9v12" stroke="#a66" stroke-width="1.400"/></symbol>
  <symbol id="cut" viewBox="0 0 24 24"><path d="M2 4l16 11M1 12l17-5" stroke="#777" stroke-width="2"/><ellipse cx="20" cy="7.500" rx="3.500" ry="2.500" transform="rotate(-25 20 7.500)" fill="none" stroke="#a66" stroke-width="1.600"/><ellipse cx="19.500" cy="17.500" rx="3.700" ry="2.700" transform="rotate(45 19.500 17.500)" fill="none" stroke="#a66" stroke-width="1.600"/></symbol>
  <symbol id="copy" viewBox="0 0 24 24"><path d="M8 2h7.500l4 4v12H8z" fill="#f5f5f5" stroke="#999"/><path d="M4 6h7.500l4 4v12H4z" fill="#fff" stroke="#555" stroke-width="1.200"/><path d="M11.500 6v4h4" fill="#ddd" stroke="#555"/><path d="M6 10.500h4M6 13h7M6 15.500h7M6 18h6M6 20h7" stroke="#777" stroke-width=".8"/></symbol>
  <symbol id="paste" viewBox="0 0 24 24"><rect x="4" y="2.500" width="16" height="20" fill="#c5bfa8" stroke="#877"/><path d="M6 5.500h8l4 4V21H6z" fill="#fff" stroke="#777"/><rect x="8" y="1" width="8" height="4.500" rx="1" fill="#bbb" stroke="#777"/><path d="M8 11h8M8 13.500h8M8 16h8M8 18.500h6" stroke="#777" stroke-width=".8"/></symbol>
  <symbol id="undo" viewBox="0 0 24 24"><path d="M2.500 10.500L9.500 3v4.500h5c9 0 10 13-2 13.500v-5c5 0 4-4.500 1-4.500h-4v7z" fill="#a58a78" stroke="#8a6c5a" stroke-width=".6"/></symbol>
  <symbol id="redo" viewBox="0 0 24 24"><path d="M21.500 10.500L14.500 3v4.500h-5c-9 0-10 13 2 13.500v-5c-5 0-4-4.500-1-4.500h4v7z" fill="#90a090" stroke="#708070" stroke-width=".6"/></symbol>

  <symbol id="exprsel" viewBox="0 0 24 24"><rect x="8" y="9.500" width="14" height="13" fill="#fce94f" stroke="#c4a000" stroke-width="1.300"/><path d="M11 2.500C7-1 2 3 7 7 0 9 2 16 10 13.500" fill="none" stroke="#5c3566" stroke-width="2"/></symbol>
  <symbol id="selall" viewBox="0 0 24 24"><g fill="#fce94f" stroke="#c4a000" stroke-width="1.300"><rect x="1.500" y="1.500" width="21" height="5"/><rect x="1.500" y="9.500" width="21" height="5"/><rect x="1.500" y="17.500" width="21" height="5"/></g></symbol>
  <symbol id="invsel" viewBox="0 0 24 24"><path d="M3 1.500h19v20z" fill="#eee" stroke="#999"/><path d="M2 2v20.500h18z" fill="#fce94f" stroke="#c4a000" stroke-width="1.200"/></symbol>
  <symbol id="desel2" viewBox="0 0 24 24"><rect x="1" y="2" width="14" height="14" fill="#fce94f" stroke="#c4a000" stroke-width="1.300"/><rect x="13" y="13.500" width="11" height="10.500" fill="#d8262c"/><circle cx="18.500" cy="18.800" r="3.600" fill="none" stroke="#fff" stroke-width="1.300"/><path d="M16 21.500l5-5" stroke="#fff" stroke-width="1.300"/></symbol>
  <symbol id="filter" viewBox="0 0 24 24"><path d="M2 5h20l-7.500 9v10l-4.500-2v-8z" fill="#6d97c4" stroke="#415a75"/><rect x="2" y="1" width="20" height="4" fill="#fce94f" stroke="#c4a000"/></symbol>
  <symbol id="totop" viewBox="0 0 24 24"><rect x="2" y="1.500" width="20" height="21" fill="#a9cdf0" stroke="#6d97c4"/><path d="M4 5h16M4 8h16M4 11h16M4 14h16" stroke="#e8f2fc"/><rect x="2.500" y="17.500" width="19" height="4.500" fill="#fce94f" stroke="#c4a000"/><path d="M12 2.500l5 6h-3.500V18h-3V8.500H7z" fill="#6d97c4" stroke="#2c4a6b"/></symbol>
  <symbol id="fnew" viewBox="0 0 24 24"><use href="#table"/><rect x="6" y="1" width="6" height="21" fill="#ccc79c" stroke="#888"/><use href="#star" x="13" y="13" width="11" height="11"/></symbol>
  <symbol id="fdel" viewBox="0 0 24 24"><use href="#table"/><rect x="6" y="1" width="6" height="21" fill="#ccc79c" stroke="#888"/><use href="#cross" x="13" y="13" width="11" height="11"/></symbol>
  <symbol id="tedit" viewBox="0 0 24 24"><use href="#table"/><use href="#penc"/></symbol>
  <symbol id="cond" viewBox="0 0 24 24"><g stroke="#666"><rect x="1.500" y="2" width="21" height="5" fill="#fff"/><rect x="1.500" y="9.500" width="21" height="5" fill="#b5f5a8" stroke="#3a8a3a"/><rect x="1.500" y="17" width="21" height="5" fill="#fff"/></g><path d="M9 4.500h11M9 12h11" stroke="#666" stroke-width="2"/><path d="M4 19.500h4" stroke="#b00" stroke-width="2"/><path d="M9 19.500h11" stroke="#f9a9a9" stroke-width="2"/></symbol>
  <symbol id="dock" viewBox="0 0 24 24"><path d="M4 2h19v14H4z" fill="#fff" stroke="#777"/><path d="M3.500 3h20" stroke="#777" stroke-width="3.500"/><rect x="1.500" y="8" width="15" height="14" fill="#eef3fa" stroke="#777"/><path d="M1.500 9.500h15" stroke="#6d97c4" stroke-width="2"/><path d="M4 13h4M10 13h5M4 16h4M10 16h5M4 19h4M10 19h5" stroke="#6d97c4" stroke-width="1.400"/></symbol>
  <symbol id="form" viewBox="0 0 24 24"><rect x="1" y="1" width="22" height="22" fill="#dce8f5" stroke="#6d97c4" stroke-width="1.300"/><path d="M4 8h5M4 17h5" stroke="#2c4a6b" stroke-width="2"/><g fill="#fff" stroke="#6d97c4"><rect x="11" y="5" width="9" height="6" rx="1"/><rect x="11" y="14" width="9" height="6" rx="1"/></g></symbol>
  <symbol id="tree" viewBox="-20 -16 40 34"><path d="M-13 0L15-12-1 13zM-8 8L-18 14" fill="none" stroke="#6f9163" stroke-width="2.800" stroke-linejoin="round" opacity=".5"/></symbol>
</svg>

<div class="relative flex h-full w-full flex-col">
  <!-- title bar -->
  <header class="flex h-[34px] shrink-0 items-center bg-white pl-[2px] text-[#8a8a8a]">
    <svg class="h-[23px] w-[23px]"><use href="#qlogo"/></svg>
    <span class="ml-[7px] pt-[2px]" data-w="120">*lyznik — QGIS</span>
    <svg class="ml-auto h-[34px] w-[190px]" viewBox="0 0 190 34" fill="none" stroke="#8a8a8a" stroke-width="1.200"><path d="M6 16.500h15M75.500 12.500h11v11h-11zM78.500 12.500v-3h11v11h-3M146 9l15 15M161 9l-15 15"/></svg>
  </header>
  <nav class="flex h-[32px] shrink-0 items-center gap-[22.500px] border-b-2 border-[#d4d4d4] bg-[#efefef] pt-[2px] pl-[15.500px] text-[#999]">
    <span data-w="59">Проект</span><span data-w="59">Правка</span><span data-w="30">Вид</span><span data-w="41">Слой</span><span data-w="88">Настройки</span><span data-w="65">Модули</span><span data-w="56">Вектор</span><span data-w="45">Растр</span><span data-w="102"><u>Б</u>аза данных</span><span data-w="78"><u>И</u>нтернет</span><span data-w="40">Меш</span><span data-w="58">Ана<u>л</u>из</span><span data-w="69">Справка</span>
  </nav>

  <!-- toolbars -->
  <div class="flex h-[58px] shrink-0 items-center border-b-2 border-[#bcbcbc] bg-linear-to-b from-[#fbfbfb] to-[#eeeeee]" data-icons="^ new open save layout layman style : hand pan zin zout zfull zsel zlay ~z11 zlast ~znext newmap new3d bmnew bm clock refresh : !select !v selform v desel v selloc v : ident abacus gear sigma table v ruler v tip ~act ~v"></div>
  <div class="flex h-[58px] shrink-0 items-center border-b-[3px] border-[#bcbcbc] bg-linear-to-b from-[#fbfbfb] to-[#eeeeee]">
    <div class="flex pt-px" data-icons="^ dsm gpkg vnew feather mem mesh virt"></div>
    <div class="ml-[702px] flex items-center pt-px" data-icons=": abc diag | abp abcr | ~abpg ~abeye ~abmove ~abrot ~abedit : gadd gfind gbin : py : help :"></div>
  </div>
  <div class="flex h-[58px] shrink-0 items-center border-b-2 border-[#bcbcbc] bg-linear-to-b from-[#fbfbfb] to-[#eeeeee] pt-px" data-icons="^ ~tri ~dotm ~v ~b1 ~b2 ~b3 ~b4 ~b5 ~b6 ~b7 ~b8 ~b9 ~b10 ~b11 ~b12 ~b13 ~b13 ~b14 ~b15 ~b16 ~v"></div>
  <div class="flex h-[58px] shrink-0 items-center border-b-2 border-[#bcbcbc] bg-linear-to-b from-[#fbfbfb] to-[#eeeeee] pt-[4px]" data-icons="^ ~circ"></div>

  <!-- workspace -->
  <main class="flex h-[679px] shrink-0">
    <aside class="flex w-[76px] shrink-0 flex-col items-center border-r-2 border-[#b8b8b8] bg-linear-to-r from-[#fcfcfc] to-[#ececec] pt-[9px]" id="side">
      <span class="flex h-[10px] flex-col justify-between py-[1px] pl-[5px]"><span class="w-[26px] border-t-2 border-dotted border-[#bbb]"></span><span class="w-[26px] border-t-2 border-dotted border-[#bbb]"></span></span>
    </aside>
    <section class="ml-[2px] w-[460px] shrink-0 border border-[#b8b8b8] bg-white"></section>
    <section class="ml-[11px] flex w-[1371px] flex-col border-b border-[#b8b8b8]">
      <div class="mt-[2px] flex h-[45px] shrink-0 items-center border-y border-[#b0cfe6] bg-[#e5f4fe]">
        <span class="ml-[397px] pt-[2px] text-[#2a559c]" data-w="29">лей</span>
        <span class="ml-[638px] flex h-[33px] w-[208px] shrink-0 items-center justify-center rounded-[3px] border-2 border-[#b4b4b4] bg-linear-to-b from-white to-[#eee]"><span class="pt-px" data-w="195">Установить обновления...</span></span>
        <svg class="mb-[3px] ml-[39px] size-[26px]" viewBox="0 0 26 26"><circle cx="13" cy="13" r="12.500" fill="#333a3e"/><path d="M8.500 8.500l9 9M17.500 8.500l-9 9" stroke="#fff" stroke-width="3.400"/></svg>
      </div>
      <svg class="block h-[631px] w-[1371px] shrink-0 bg-[#f2efe9]" viewBox="549 345 1371 631">
        <path d="M549 345H985L1026 675Q1027 735 1008 770Q985 830 965 877L917 976H549z" fill="#add19e"/>
        <path d="M985 345L1026 675 1920 667V345z" fill="#f2dad9"/>
        <path d="M1580 345L1601 521 1920 509V345z" fill="#d9d0c9"/>
        <g fill="none"><path d="M1580 345L1601 521 1920 509" stroke="#c3b5aa" stroke-width="3" opacity=".8"/>
        <path d="M985 345L1026 675 1920 667" stroke="#b3a5a2" stroke-width="5.500" opacity=".45"/><path d="M985 345L1026 675 1920 667" stroke="#857876" stroke-width="3.500" stroke-dasharray="2 2" opacity=".55"/></g>
        <use href="#tree" x="791" y="864" width="40" height="34"/><use href="#tree" x="690" y="913" width="40" height="34"/><use href="#tree" x="897" y="868" width="40" height="34"/><use href="#tree" x="566" y="952" width="40" height="34"/><use href="#tree" x="582" y="848" width="40" height="34"/><use href="#tree" x="942" y="553" width="40" height="34"/><use href="#tree" x="972" y="758" width="40" height="34"/><use href="#tree" x="935" y="651" width="40" height="34"/>
        <g fill="none" stroke-linejoin="round">
          <g stroke="#fff" stroke-width="11" opacity=".38"><path d="M1015 746L1920 716M1015 746L1796 845.500 1812 864 1920 977M1015 746L1377 868 1402 877 1690 981M1402 877L1134 864.600 1112 872 940 942 910 953 895 980M954 668.600L1015 746 743 862 548 942M1600 955L1628 961 1632 980"/></g>
          <g stroke="#fa8072" stroke-width="6" stroke-linecap="round" stroke-dasharray="5.500 12 1.500 14" opacity=".85"><path d="M1015 746L1920 716"/><path d="M1015 746L1796 845.500 1812 864 1920 977"/><path d="M1015 746L1377 868 1402 877 1690 981"/><path d="M1402 877L1134 864.600 1112 872 940 942 910 953 895 980"/><path d="M954 668.600L1015 746 743 862 548 942"/><path d="M1620 957l10 23"/></g>
        </g>
        <g fill="none" stroke="#8e5ea2" stroke-width="1.500">
          <path d="M953 615L994.400 655.600 1156 709.800 1474.400 773 1781 818.600 1921 841.500"/>
          <path d="M953 622L1002.500 678.600 1197.500 686 1256 691 1385.600 702.400 1594 763.600 1809 851 1921 919"/>
          <path d="M1077 703L1197.500 686 1256 691 1478 784 1565 825.500M1099 708L1245.600 705.500 1313 760.500 1337 771.500"/>
        </g>
        <g fill="none" stroke="#ff8412" stroke-width="1.600">
          <path d="M953 684.600L1002.500 678.600 1025.600 704 1043 706 1064 709 1099 708M953 720.600L1043 706 1077 703M1337 771.500L1434.400 816.500 1465.600 820 1479.400 824.700 1477.500 840 1518.600 872.400 1691 976M1565 825.500L1730.600 902 1826 976M549 898L609 858"/>
        </g>
        <g fill="#7a8a8c" stroke="#3c4648" stroke-width="1.200" id="nodes"></g>
        <circle cx="1064" cy="709" r="5.500" fill="#ff0" stroke="#4c4c1c" stroke-width="1.200"/>
      </svg>
    </section>
  </main>

  <!-- status bar -->
  <footer class="flex h-[43px] shrink-0 items-center bg-[#efefef] pt-px pl-[6px] [&>*]:shrink-0">
    <div class="flex h-[33px] w-[300px] items-center rounded-[4px] border-2 border-[#b0b0b0] bg-white pl-[11px]"><svg class="size-[21px]" viewBox="0 0 21 21" fill="none" stroke="#888" stroke-width="2"><circle cx="9" cy="8.500" r="7"/><path d="M13.500 13.500l6 6"/></svg><span class="ml-[10px] pt-[2px] text-[#808080]" data-w="116">Искать (Ctrl+K)</span></div>
    <div class="ml-[12px] w-[224px] overflow-hidden pt-[6px] pb-1 whitespace-nowrap"><span data-w="229">1 объект выделен на слое 202</span></div>
    <span class="ml-[13px] pt-[2px]" data-w="93">Координаты</span>
    <div class="ml-[5px] flex h-[33px] w-[217px] items-center rounded-[4px] border-2 border-[#b0b0b0] bg-white pl-[8px]"><span class="pt-[2px] whitespace-pre" data-w="195">-2211536,48  -2915140,24</span></div>
    <svg class="ml-[5px] h-[26px] w-[26px]" viewBox="0 0 26 26" fill="none" stroke="#222"><rect x="5" y="1" width="9" height="12" rx="4.500" transform="rotate(-25 9 7)" stroke-width="2"/><path d="M8 3l2 6M3 17c4 1 6-3 10-4" stroke-width="2.500"/><circle cx="15" cy="19" r="5.500" stroke-width="3"/><circle cx="15" cy="19" r="1.500" fill="#222"/><path d="M15 5l8-4M18 8l6 3M1 18l4 3M19 13l4-5" stroke-dasharray="2 2" stroke-width="1.500"/></svg>
    <span class="ml-[19px] pt-px" data-w="67">Масштаб</span>
    <div class="ml-[5px] flex h-[33px] w-[120px] items-center overflow-hidden rounded-[4px] border-2 border-[#b0b0b0] bg-white pl-[4px]"><span class="pt-[2px]" data-w="42">1:275</span><span class="ml-auto flex h-full w-[29px] items-center justify-center border-l border-[#b0b0b0] bg-linear-to-b from-white to-[#ededed]"><svg class="h-[7px] w-[12px]" viewBox="0 0 12 7"><path d="M0 0h12L6 7z" fill="#555"/></svg></span></div>
    <svg class="ml-[19px] h-[24px] w-[18px]" viewBox="0 0 18 24"><path d="M4 11V7a5 5.500 0 0 1 10 0v4" fill="none" stroke="#777" stroke-width="2"/><rect y="11" width="18" height="12" rx="1.500" fill="#555"/></svg>
    <span class="ml-[14px] pt-[2px]" data-w="91">Увеличение</span>
    <div class="ml-[5px] flex h-[30px] w-[126px] items-center rounded-[4px] border-2 border-[#b0b0b0] bg-white pl-[5px]"><span class="pt-[2px]" data-w="44">100%</span><span class="ml-auto flex h-full w-[21px] flex-col items-center justify-center gap-[5px] border-l border-[#b0b0b0]"><svg class="h-[6px] w-[11px]" viewBox="0 0 12 6"><path d="M0 6h12L6 0z" fill="#555"/></svg><svg class="h-[6px] w-[11px]" viewBox="0 0 12 6"><path d="M0 0h12L6 6z" fill="#555"/></svg></span></div>
    <span class="ml-[14px] pt-[2px]" data-w="64">Поворот</span>
    <div class="ml-[13px] flex h-[30px] w-[126px] items-center rounded-[4px] border-2 border-[#b0b0b0] bg-white pl-[5px]"><span class="pt-[2px]" data-w="37">0,0 °</span><span class="ml-auto flex h-full w-[21px] flex-col items-center justify-center gap-[5px] border-l border-[#b0b0b0]"><svg class="h-[6px] w-[11px]" viewBox="0 0 12 6"><path d="M0 6h12L6 0z" fill="#555"/></svg><svg class="h-[6px] w-[11px]" viewBox="0 0 12 6"><path d="M0 0h12L6 6z" fill="#555"/></svg></span></div>
    <svg class="ml-[9px] size-[21px] border border-[#b0b0b0] bg-white" viewBox="0 0 20 20"><path d="M5 9.500l4 5.500 6-11" fill="none" stroke="#000" stroke-width="2.400"/></svg>
    <span class="ml-[7px] pt-px" data-w="80">Отрисовка</span>
    <svg class="ml-[25px] size-[22px] overflow-visible" viewBox="0 0 22 22" fill="none" stroke="#666" stroke-width="1.300"><path d="M11 1C4 1 0 6 0 10l5 10h12l5-10C22 6 18 1 11 1zM0 10h22M2 6h18M3 15h16M11 1v20M7 2C4 8 6 15 9 20M15 2c3 6 1 13-2 18"/></svg>
    <span class="ml-[4px] pt-[2px]" data-w="80">EPSG:3576</span>
    <svg class="ml-[36px] h-[24px] w-[25px]" viewBox="0 0 25 24"><ellipse cx="12" cy="10" rx="12" ry="10" fill="#555"/><path d="M13 17l10 6-1-9z" fill="#555"/><g fill="#fff"><circle cx="7" cy="10" r="1.700"/><circle cx="12" cy="10" r="1.700"/><circle cx="17" cy="10" r="1.700"/></g></svg>
  </footer>

  <!-- taskbar -->
  <div class="flex h-[60px] shrink-0 bg-[#26211e] text-white">
    <div class="flex w-[72px] items-center justify-center"><svg class="size-[25px]" viewBox="0 0 24 24" fill="#fff"><path d="M0 3.500l10-1.400v9.300H0zM11 2l13-2v11.400H11zM0 12.500h10v9.300L0 20.400zM11 12.500h13V24l-13-2z"/></svg></div>
    <div class="flex w-[72px] items-center justify-center"><svg class="mb-px size-[34px]" viewBox="0 0 34 34" fill="none" stroke="#fff" stroke-width="2.600"><circle cx="20" cy="13" r="11.500"/><path d="M12 21.500L1.500 33"/></svg></div>
    <div class="flex w-[80px] items-center justify-center"><svg class="h-[32px] w-[34px]" viewBox="0 0 34 32"><path d="M1 9l8-2v17l-8-2z" fill="#999" stroke="#666"/><path d="M9 3l24 3-2 18-21-2z" fill="#e6e6e6" stroke="#aaa"/><path d="M11.500 6l19 2-1.500 13-16-1.500z" fill="#dcebf7"/><path d="M12 15l4-1 2-5 3 8 3-6 2 5 3-1" fill="none" stroke="#2f7fc0" stroke-width="1.200"/><ellipse cx="22" cy="28" rx="9" ry="3" fill="#ccc"/><path d="M19 22h5v6h-5z" fill="#bbb"/></svg></div>
    <div class="flex w-[72px] items-center justify-center"><span class="flex size-[36px] items-center justify-center rounded-full bg-[#0b5cff] pb-[2px] text-[10.500px] font-bold"><span data-w="26">zoom</span></span></div>
    <div class="flex w-[74px] items-center justify-center"><svg class="mb-[5px] size-[32px]" viewBox="0 0 32 32"><path d="M1 9L8 1h23v29H1z" fill="#a8336b" stroke="#e8c5d5"/><path d="M2 9q8-7 20-7L8 18l-6 4z" fill="#d894b4" opacity=".7"/><path d="M6 31l1-6 11-10a7 7 0 1 1 5 5l-4 1-2 4-4 1-3 4z" fill="#f5f0f2"/><circle cx="25" cy="10" r="2" fill="#a8336b"/></svg></div>
    <div class="flex w-[76px] items-center justify-center"><svg class="size-[34px]" viewBox="0 0 34 34"><path d="M1 9L8 1h22v29H1z" fill="#e8582a" stroke="#f5cdb8"/><path d="M2 9q8-7 20-7L8 22z" fill="#fab696" opacity=".8"/><path d="M7 8l26 1v24L7 30z" fill="#fdf3ee"/><path d="M10.500 13h8v3h-5v2h4v3h-4v3h5v3h-8z" fill="#d9481c"/><circle cx="24.500" cy="20" r="5.500" fill="#d9481c"/><path d="M24.500 20v-3.500a3.500 3.500 0 0 1 3.500 3.500z" fill="#fdf3ee"/></svg></div>
    <div class="flex w-[76px] flex-col items-center"><svg class="mt-[13px] size-[34px]" viewBox="0 0 34 34"><path d="M1 9L8 1h22v29H1z" fill="#3a66b0" stroke="#c0d0e8"/><path d="M2 9q8-7 20-7L8 22z" fill="#9ab8e0" opacity=".8"/><path d="M10 5l23-1v29L10 30z" fill="#f3f7fc"/><text x="11" y="22" font-size="16" font-weight="700" fill="#1f4a94" font-family="Liberation Serif" textLength="13">W</text><path d="M25 10h6M25 14h6M25 18h6M13 24h18M13 27.500h18" stroke="#1f4a94" stroke-width="2"/></svg><span class="mt-auto h-[3px] w-[61px] bg-[#76b9ed]"></span></div>
    <div class="flex w-[76px] items-center justify-center"><span class="mb-[3px] flex size-[32px] items-center justify-center rounded-[5px] bg-[#330000] pb-px text-[18px] font-semibold text-[#ff9a00]">Ai</span></div>
    <div class="flex w-[75px] items-center justify-center"><span class="mb-[3px] flex size-[32px] items-center justify-center border-2 border-[#00c8ff] bg-[#001d26] pb-[2px] text-[18px] text-[#00c8ff]"><span data-w="19">Ps</span></span></div>
    <div class="flex w-[75px] flex-col items-center"><svg class="mt-[12px] h-[40px] w-[40px]" viewBox="0 0 40 40"><circle cx="19" cy="18" r="18" fill="#fbc116"/><path d="M3.400 9A18 18 0 0 1 34.600 9H19a9 9 0 0 0-8 5z" fill="#ea4335"/><path d="M3.400 9A18 18 0 0 0 18 36l8-13-15-2z" fill="#34a04e"/><circle cx="19" cy="18" r="8.500" fill="#fff"/><circle cx="19" cy="18" r="6.700" fill="#4285f4"/><circle cx="28" cy="27" r="11.500" fill="#7a7f92"/><path d="M19 20q9-7 15 1l-3 7-7-2z" fill="#3c5078"/><path d="M31 22q9 3 6 11l-7 5-2-8z" fill="#ecdfd6"/><path d="M24 29l5 2-1 6-5-3z" fill="#a05540"/></svg><span class="mt-auto h-[3px] w-[61px] bg-[#76b9ed]"></span></div>
    <div class="flex w-[74px] flex-col items-center"><svg class="mt-[16px] h-[28px] w-[34px]" viewBox="0 0 34 28"><path d="M1 2q0-2 2-2h8l4 4H1z" fill="#e09a10"/><rect x="1" y="3" width="32" height="23" rx="1.500" fill="#fcd462"/><path d="M6 27V17q0-2 2-2h18q2 0 2 2v10h-6v-6H12v6z" fill="#3a96dd"/></svg><span class="mt-auto h-[3px] w-[61px] bg-[#76b9ed]"></span></div>
    <div class="relative ml-[2px] flex w-[73px] flex-col items-center bg-[#a85c23]"><svg class="mt-[14px] size-[33px]" viewBox="0 0 33 33"><circle cx="16.500" cy="16.500" r="16.500" fill="#2ba0dc"/><path d="M6 16.500L24.500 9 22 25l-6-4.500-3 3v-5l8-7-10 6z" fill="#fff"/></svg><span class="absolute top-[34px] left-[34px] flex h-[18px] w-[24px] items-center justify-center rounded-[5px] bg-[#f23c34] text-[13px]"><span data-w="19">..16</span></span><span class="mt-auto h-[3px] w-full bg-[#ff7b00]"></span></div>
    <div class="ml-[2px] flex w-[73px] flex-col items-center border-r-[6px] border-[#3d3a38] bg-[#524e4b]"><svg class="mt-[13px] ml-[4px] size-[35px]"><use href="#qlogo"/></svg><span class="mt-auto h-[3px] w-full bg-[#76b9ed]"></span></div>
    <div class="ml-[7px] flex w-[62px] flex-col items-center"><svg class="mt-[12px] h-[36px] w-[29px]" viewBox="0 0 29 36"><rect width="29" height="36" rx="2" fill="#7c8796"/><rect x="3" y="3" width="23" height="6" fill="#4cd0f7"/><g fill="#dfe3ea"><rect x="3" y="12" width="6.500" height="5.500"/><rect x="11.200" y="12" width="6.500" height="5.500"/><rect x="19.500" y="12" width="6.500" height="5.500"/><rect x="3" y="19.500" width="6.500" height="5.500"/><rect x="11.200" y="19.500" width="6.500" height="5.500"/><rect x="3" y="27" width="6.500" height="5.500"/><rect x="11.200" y="27" width="6.500" height="5.500"/></g><rect x="19.500" y="19.500" width="6.500" height="13" fill="#154a8c"/></svg><span class="mt-auto h-[3px] w-[61px] bg-[#76b9ed]"></span></div>
    <svg class="ml-auto h-[60px] w-[240px]" viewBox="1441 1020 240 60" fill="none" stroke="#fff" stroke-width="1.500"><path d="M1453.500 1054l8.500-8.500 8.500 8.500M1503.500 1044h10v13h-10zM1513.500 1049l5-3v9l-5-3M1504 1041q6-4 12 0M1504 1060q6 4 12 0M1547.500 1044.500h20v12h-20zM1569 1048v5M1595.500 1047h3l5-5v17l-5-5h-3z"/><path d="M1550 1047h7v7h-7z" fill="#fff" stroke="none"/><path d="M1608 1046q4 5 0 9M1611.500 1043q6 8 0 15M1615 1041q8 10 0 19" stroke="#777"/><path d="M1647 1060q0-16 17-18M1651.500 1060q0-11 12.500-13M1656 1060q0-7 8-8.500" stroke-width="1.300"/><circle cx="1662.500" cy="1058.500" r="1.800" fill="#fff" stroke="none"/></svg>
    <div class="ml-[8px] flex w-[31px] items-center pt-[2px]"><span data-w="30">РУС</span></div>
    <div class="ml-[21px] flex w-[88px] flex-col items-center pt-[8px]"><span data-w="33">0:16</span><span class="mt-[10px]" data-w="86">07.04.2025</span></div>
    <svg class="mt-[17px] ml-[28px] h-[27px] w-[26px]" viewBox="0 0 26 27"><path d="M0 1h24v19H13l-4 5-1-5H0z" fill="#fff"/><path d="M5 6h14M5 10.500h14M5 15h9" stroke="#26211e" stroke-width="1.500"/><path d="M20 13q5 6-5 9 6 5 10-3 0-5-5-6z" fill="#26211e" stroke="#fff" stroke-width="1.200"/></svg>
    <span class="mr-[5px] ml-[30px] w-[2px] bg-[#65615e]"></span>
  </div>

  <!-- attribute table window -->
  <div class="absolute top-[226px] left-[73px] flex h-[636px] w-[881px] flex-col border border-[#5f5f5f] bg-[#efefef] shadow-[0_5px_18px_2px_rgba(0,0,0,0.42)]">
    <div class="flex h-[45px] shrink-0 items-center bg-white pl-[11px]">
      <svg class="mb-px size-[24px] shrink-0"><use href="#qlogo"/></svg>
      <span class="ml-[10px] pt-px whitespace-nowrap" data-w="621">2022-01-09_14-00_Sun — track_points — объектов всего: 835, отфильтров...</span>
      <svg class="ml-auto h-[45px] w-[190px] shrink-0" viewBox="0 0 190 45" fill="none" stroke="#000" stroke-width="1.300"><path d="M8.500 21.500h15.500M77.500 14.500h14v14h-14zM148 14l15 15M163 14l-15 15"/></svg>
    </div>
    <div class="flex h-[47px] shrink-0 items-center pb-[3px] pl-[4.500px]" id="tools"></div>
    <div class="ml-[2px] flex h-[476px] shrink-0">
      <div class="flex w-[855px] shrink-0 flex-col overflow-hidden bg-[#efefef]">
        <div class="flex h-[29px] shrink-0 border-b-2 border-[#b0b0b0] bg-linear-to-b from-[#fbfbfb] to-[#ececec] [&>span]:pt-[6px] [&>span]:pl-[2px]">
          <span class="w-[37px] shrink-0"></span>
          <span class="flex w-[149px] shrink-0 items-center justify-center border-r border-[#c4c4c4]"><span data-w="96">track_seg_id</span></span>
          <span class="flex w-[150px] shrink-0 items-center justify-center border-r border-[#c4c4c4]"><span data-w="145">track_seg_point_id</span></span>
          <span class="flex w-[150px] shrink-0 items-center justify-center border-r border-[#c4c4c4]"><span data-w="22">ele</span></span>
          <span class="flex w-[302px] shrink-0 items-center justify-center border-r-2 border-[#c4c4c4]"><span data-w="35">time</span></span>
          <span class="flex shrink-0 items-center"><span class="ml-[44px]" data-w="41">magv</span></span>
        </div>
        <div class="h-[447px] overflow-hidden" id="rows10"></div>
      </div>
      <div class="flex w-[21px] shrink-0 flex-col border-l border-[#d0d0d0] bg-[#e4e4e4]">
        <span class="flex h-[20px] shrink-0 items-center justify-center border-b border-[#bbb] bg-[#f8f8f8] pr-[2px]"><svg class="h-[6px] w-[11px]" viewBox="0 0 12 6"><path d="M0 6h12L6 0z" fill="#555"/></svg></span>
        <span class="mt-[331px] h-[41px] border-y-2 border-[#bbb] bg-linear-to-r from-white to-[#ededed]"></span>
        <span class="mt-auto flex h-[22px] items-center justify-center border-t border-[#bbb] bg-[#f8f8f8] pr-[2px] pb-[2px]"><svg class="h-[6px] w-[11px]" viewBox="0 0 12 6"><path d="M0 0h12L6 6z" fill="#555"/></svg></span>
      </div>
    </div>
    <div class="ml-[2px] flex h-[21px] w-[876px] shrink-0 bg-[#e4e4e4]">
      <span class="flex w-[20px] items-center justify-center border-r-2 border-[#bbb] bg-[#f8f8f8]"><svg class="h-[11px] w-[6px]" viewBox="0 0 6 12"><path d="M6 0v12L0 6z" fill="#555"/></svg></span>
      <span class="ml-[28px] w-[167px] border-x-2 border-[#bbb] bg-linear-to-b from-white to-[#f2f2f2]"></span>
      <span class="ml-auto flex w-[21px] items-center justify-center border-l border-[#bbb] bg-[#f8f8f8] pr-[2px]"><svg class="h-[11px] w-[6px]" viewBox="0 0 6 12"><path d="M0 0v12L6 6z" fill="#555"/></svg></span>
      <span class="w-[21px] border-r border-b border-[#bbb] bg-[#efefef]"></span>
    </div>
    <div class="flex flex-1 items-center px-[4px]">
      <span class="flex h-[34px] w-[146px] items-center rounded-[3px] border-2 border-[#b4b4b4] bg-linear-to-b from-white to-[#eee] pl-[3px]"><svg class="size-[24px] shrink-0"><use href="#table"/></svg><span class="ml-[3px] shrink-0 pt-px" data-w="94">Все объекты</span><svg class="mt-[18px] ml-[8px] h-[5px] w-[8px] shrink-0" viewBox="0 0 12 6"><path d="M0 0h12L6 6z" fill="#555"/></svg></span>
      <svg class="mr-[8px] ml-auto size-[20px]"><use href="#form"/></svg>
      <span class="flex h-[34px] w-[36px] items-center justify-center rounded-[3px] border-2 border-[#aaa] bg-[#dcdcdc]"><svg class="size-[24px]"><use href="#table"/></svg></span>
    </div>
  </div>
</div>

<script>
const icon = (n, c) => `<svg class="${c}"><use href="#${n}"/></svg>`;
const DIM = 'size-9 opacity-35 grayscale-[.7]', ON = 'size-9';
const arrow = c => `<svg class="${c}" viewBox="0 0 12 8"><path d="M0 0h12L6 8z" fill="#555"/></svg>`;
function slot(t) {
  if (t === '^') return '<span class="flex w-[19px] shrink-0 pl-[8px]"><span class="flex h-[26px] w-[6px] justify-between"><span class="border-l-2 border-dotted border-[#bbb]"></span><span class="border-l-2 border-dotted border-[#bbb]"></span></span></span>';
  if (t === ':') return '<span class="flex w-[25px] shrink-0 pl-[14px]"><span class="flex h-[26px] w-[6px] justify-between"><span class="border-l-2 border-dotted border-[#bbb]"></span><span class="border-l-2 border-dotted border-[#bbb]"></span></span></span>';
  if (t === '|') return '<span class="flex w-[10.500px] shrink-0 items-center justify-center"><span class="h-[30px] w-[2px] bg-[#d6d6d6]"></span></span>';
  if (t === '!select') return `<span class="ml-[1px] flex h-[46px] w-[48px] shrink-0 items-center justify-center rounded-[3px] border border-[#a8a8a8] bg-[#dadada]">${icon('select', ON)}</span>`;
  if (t === '!v') return `<span class="flex h-[46px] w-[17.500px] shrink-0 items-center justify-center rounded-[3px] border border-[#a8a8a8] bg-[#dadada]">${arrow('h-[7px] w-[11px]')}</span>`;
  if (t === 'v') return `<span class="flex w-[18px] shrink-0 items-center justify-center">${arrow('h-[7px] w-[11px]')}</span>`;
  if (t === '~v') return `<span class="flex w-[17.500px] shrink-0 items-center justify-center">${arrow('h-[7px] w-[11px] opacity-60')}</span>`;
  const dim = t[0] === '~';
  return `<span class="flex w-[49.450px] shrink-0 items-center justify-center">${icon(t.replace('~', ''), dim ? DIM : ON)}</span>`;
}
document.querySelectorAll('[data-icons]').forEach(e => e.innerHTML = e.dataset.icons.split(' ').map(slot).join(''));

document.getElementById('side').insertAdjacentHTML('beforeend', 'pencils* ~pencil ~savee ~line! ~dotn ~vertex! ~medit ~trash ~cut copy ~paste ~undo ~redo'.split(' ').map(t => {
  const n = t.replace(/[~*!]/g, '');
  const a = t.endsWith('*') ? '<span class="absolute top-[38px] left-[51px]">' + arrow('h-[5px] w-[9px]') + '</span>' : t.endsWith('!') ? '<span class="absolute top-[21px] left-[58px]">' + arrow('h-[7px] w-[11px] opacity-60') + '</span>' : '';
  const pad = t.endsWith('!') ? 'pr-[12px]' : 'pl-[4px]';
  return `<span class="relative flex h-[48.100px] w-[75px] shrink-0 items-center justify-center ${pad}">${icon(n, t[0] === '~' ? DIM : ON)}${a}</span>`;
}).join(''));

document.getElementById('tools').innerHTML = '~pencil ~medit ~savee refresh | copy | exprsel selall invsel desel2 filter totop pan zsel | ~fnew ~fdel tedit abacus | cond | act dock'.split(' ').map(t =>
  t === '|' ? '<span class="flex w-[11.500px] shrink-0 justify-center"><span class="h-[18px] w-[2px] bg-[#fdfdfd]"></span></span>'
  : `<span class="flex w-[37.300px] shrink-0 items-center justify-center">${icon(t.replace('~', ''), t[0] === '~' ? 'size-6 opacity-35 grayscale-[.7]' : 'size-6')}</span>`).join('');

const times = ['03', '09', '14', '20', '26', '31', '36', '42', '48', '54'];
document.getElementById('rows10').innerHTML = times.map((s, i) => {
  const sel = i === 4;
  const row = sel ? 'flex h-[45px] text-white' : 'flex h-[45px]';
  const bg = sel ? 'bg-[#0078d7]' : i % 2 ? 'bg-white' : 'bg-[#e8e7e3]';
  const cell = 'flex shrink-0 items-center justify-end border-r border-b border-[#c4c4c4] pr-[5px] pt-[2px] ' + bg;
  const first = sel ? 'flex shrink-0 items-center justify-end border-[3px] border-[#00f57a] bg-[#1583df] pr-[3px] pt-[1px]' : cell;
  return `<div class="${row}"><span class="flex w-[37px] shrink-0 items-center justify-center border-r-2 border-b border-[#b0b0b0] bg-linear-to-b from-[#fbfbfb] to-[#ececec] pt-[5px] text-black"><span data-w="29">${694 + i}</span></span>
  <span class="${first} w-[149px]"><span data-w="9.5">0</span></span><span class="${cell} w-[150px]"><span data-w="29">${693 + i}</span></span><span class="${cell} w-[150px]"><span data-w="41">${i ? '139,1' : '128,3'}</span></span><span class="${cell} w-[302px]"><span data-w="204">09.01.2022 12:03:${s} (UTC)</span></span><span class="${cell} w-[80px]"></span></div>`;
}).join('');

document.getElementById('nodes').innerHTML = [[994.4,655.6],[1002.5,678.6],[1025.6,704],[1043,706],[1156,709.8],[1197.5,686],[1245.6,705.5],[1256,691],[1385.6,702.4],[1313,760.5],[1474.4,773],[1478,784],[1594,763.6],[1434.4,816.5],[1465.6,820],[1479.4,824.7],[1477.5,840],[1518.6,872.4],[1781,818.6],[1809,851],[1730.6,902],[609,858]].map(p => `<circle cx="${p[0]}" cy="${p[1]}" r="5.700"/>`).join('');

// Adjust tracking so each label takes its nominal width
const labels = [...document.querySelectorAll('[data-w]')];
labels.forEach(e => e.classList.add('inline-block', 'shrink-0', 'whitespace-pre'));
function fit() {
  labels.forEach(e => e.style.letterSpacing = '0px');
  const d = labels.map(e => e.dataset.w - e.getBoundingClientRect().width);
  labels.forEach((e, i) => e.style.letterSpacing = (d[i] / e.textContent.length).toFixed(3) + 'px');
}
fit();
document.fonts.ready.then(fit);
addEventListener('load', () => { fit(); requestAnimationFrame(fit); [30, 100, 250].forEach(t => setTimeout(fit, t)); });
new ResizeObserver(fit).observe(document.body);
</script>
</body>
</html>
